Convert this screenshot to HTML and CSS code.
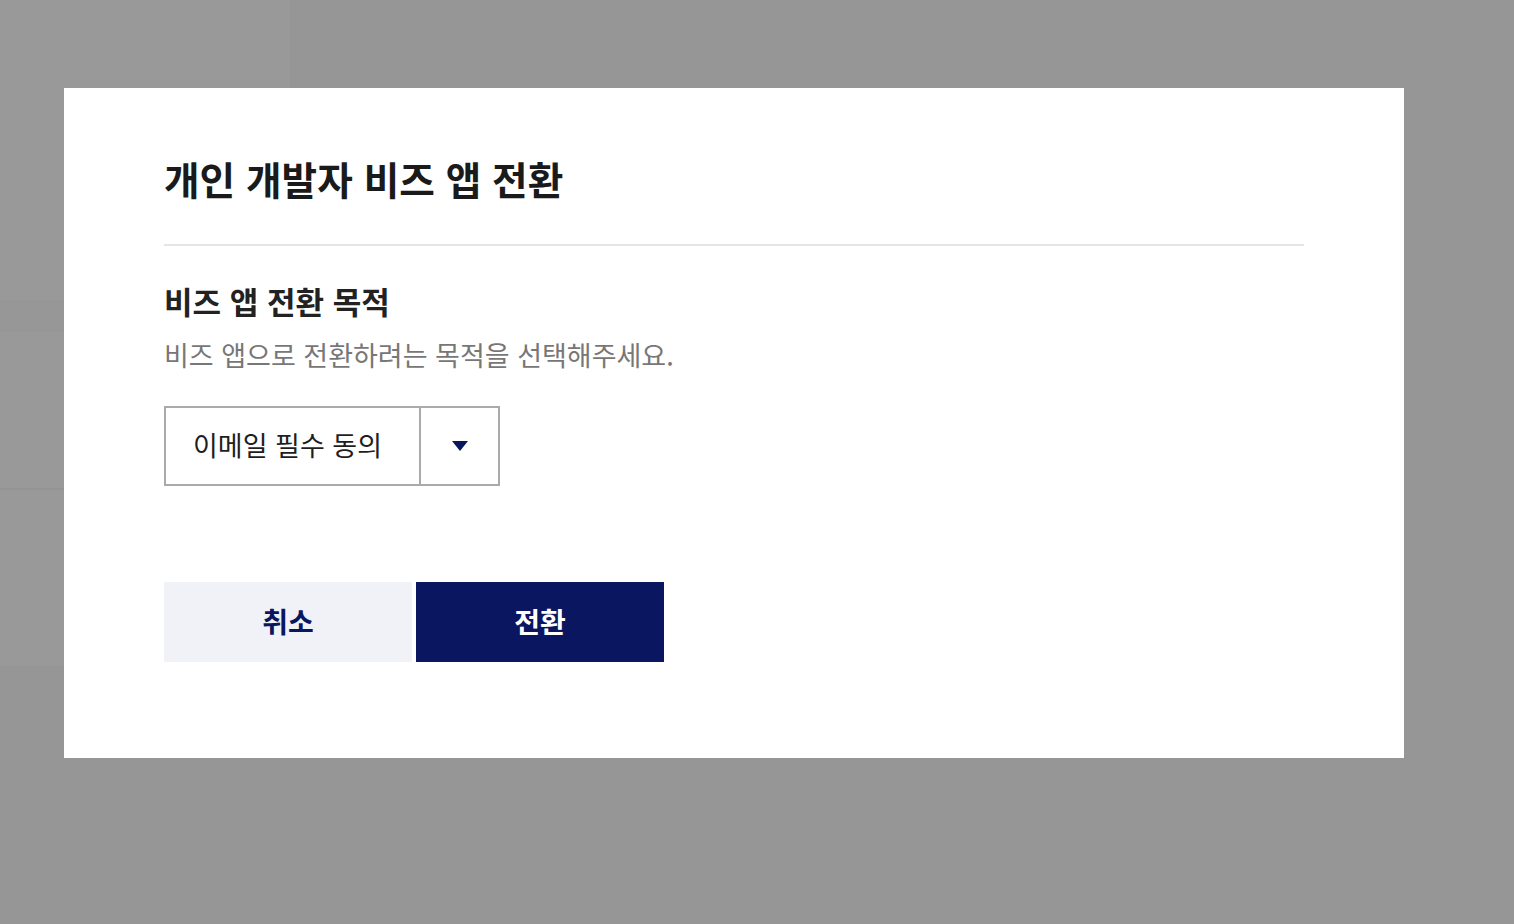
FILE: index.html
```html
<!DOCTYPE html>
<html lang="ko">
<head>
<meta charset="utf-8">
<link rel="stylesheet" href="styles.css">
</head>
<body>
<div class="page">
  <div class="bg-side">
    <div class="side-top"></div>
    <div class="side-band"></div>
    <div class="side-mid"></div>
    <div class="side-low"></div>
  </div>
  <div class="overlay">
    <div class="modal">
      <h1 class="modal-title">개인 개발자 비즈 앱 전환</h1>
      <hr class="divider">
      <h2 class="section-title">비즈 앱 전환 목적</h2>
      <p class="section-desc">비즈 앱으로 전환하려는 목적을 선택해주세요.</p>
      <div class="select">
        <span class="select-value">이메일 필수 동의</span>
        <span class="select-arrow">
          <svg width="16" height="10" viewBox="0 0 16 10"><path d="M0 0H16L8 10Z" fill="#0a1660"/></svg>
        </span>
      </div>
      <div class="actions">
        <button class="btn btn-cancel">취소</button>
        <button class="btn btn-primary">전환</button>
      </div>
    </div>
  </div>
</div>
</body>
</html>
```

FILE: styles.css
```css
* { box-sizing: border-box; }
html, body { margin: 0; padding: 0; }
body {
  width: 1514px;
  height: 924px;
  overflow: hidden;
  background: #959695;
  font-family: "Noto Sans CJK KR", "Noto Sans", sans-serif;
}
.page {
  position: relative;
  width: 1514px;
  height: 924px;
}
.bg-side {
  width: 290px;
  display: flex;
  flex-direction: column;
}
.side-top { height: 300px; background: #999999; }
.side-band { height: 32px; background: #969796; }
.side-mid { height: 158px; background: #999999; border-bottom: 2px solid #939393; }
.side-low { height: 176px; background: #999999; }
.overlay {
  position: absolute;
  inset: 0;
  padding: 88px 0 0 64px;
}
.modal {
  width: 1340px;
  height: 670px;
  background: #fff;
  padding: 62px 100px 0 100px;
}
.modal-title {
  margin: 0;
  font-size: 38.7px;
  line-height: 56px;
  font-weight: 700;
  color: #1a1a1a;
}
.divider {
  margin: 38px 0 0 0;
  border: 0;
  height: 2px;
  background: #e5e5e5;
}
.section-title {
  margin: 35px 0 0 0;
  font-size: 31px;
  line-height: 40px;
  font-weight: 700;
  color: #222;
}
.section-desc {
  margin: 15px 0 0 0;
  font-size: 27px;
  line-height: 38px;
  color: #777;
}
.select {
  margin-top: 32px;
  width: 336px;
  height: 80px;
  border: 2px solid #aaaaaa;
  display: flex;
  align-items: stretch;
}
.select-value {
  flex: 1;
  display: flex;
  align-items: center;
  padding: 0 0 4px 27px;
  font-size: 27px;
  color: #1e1e1e;
  border-right: 2px solid #aaaaaa;
}
.select-arrow {
  width: 77px;
  display: flex;
  align-items: center;
  justify-content: center;
}
.actions {
  margin-top: 96px;
  display: flex;
  gap: 4px;
}
.btn {
  width: 248px;
  height: 80px;
  border: 0;
  font-family: inherit;
  font-size: 28px;
  font-weight: 700;
  padding: 0 0 3px 0;
}
.btn-cancel { background: #f1f2f8; color: #0a1660; }
.btn-primary { background: #0a1660; color: #fff; }
```
